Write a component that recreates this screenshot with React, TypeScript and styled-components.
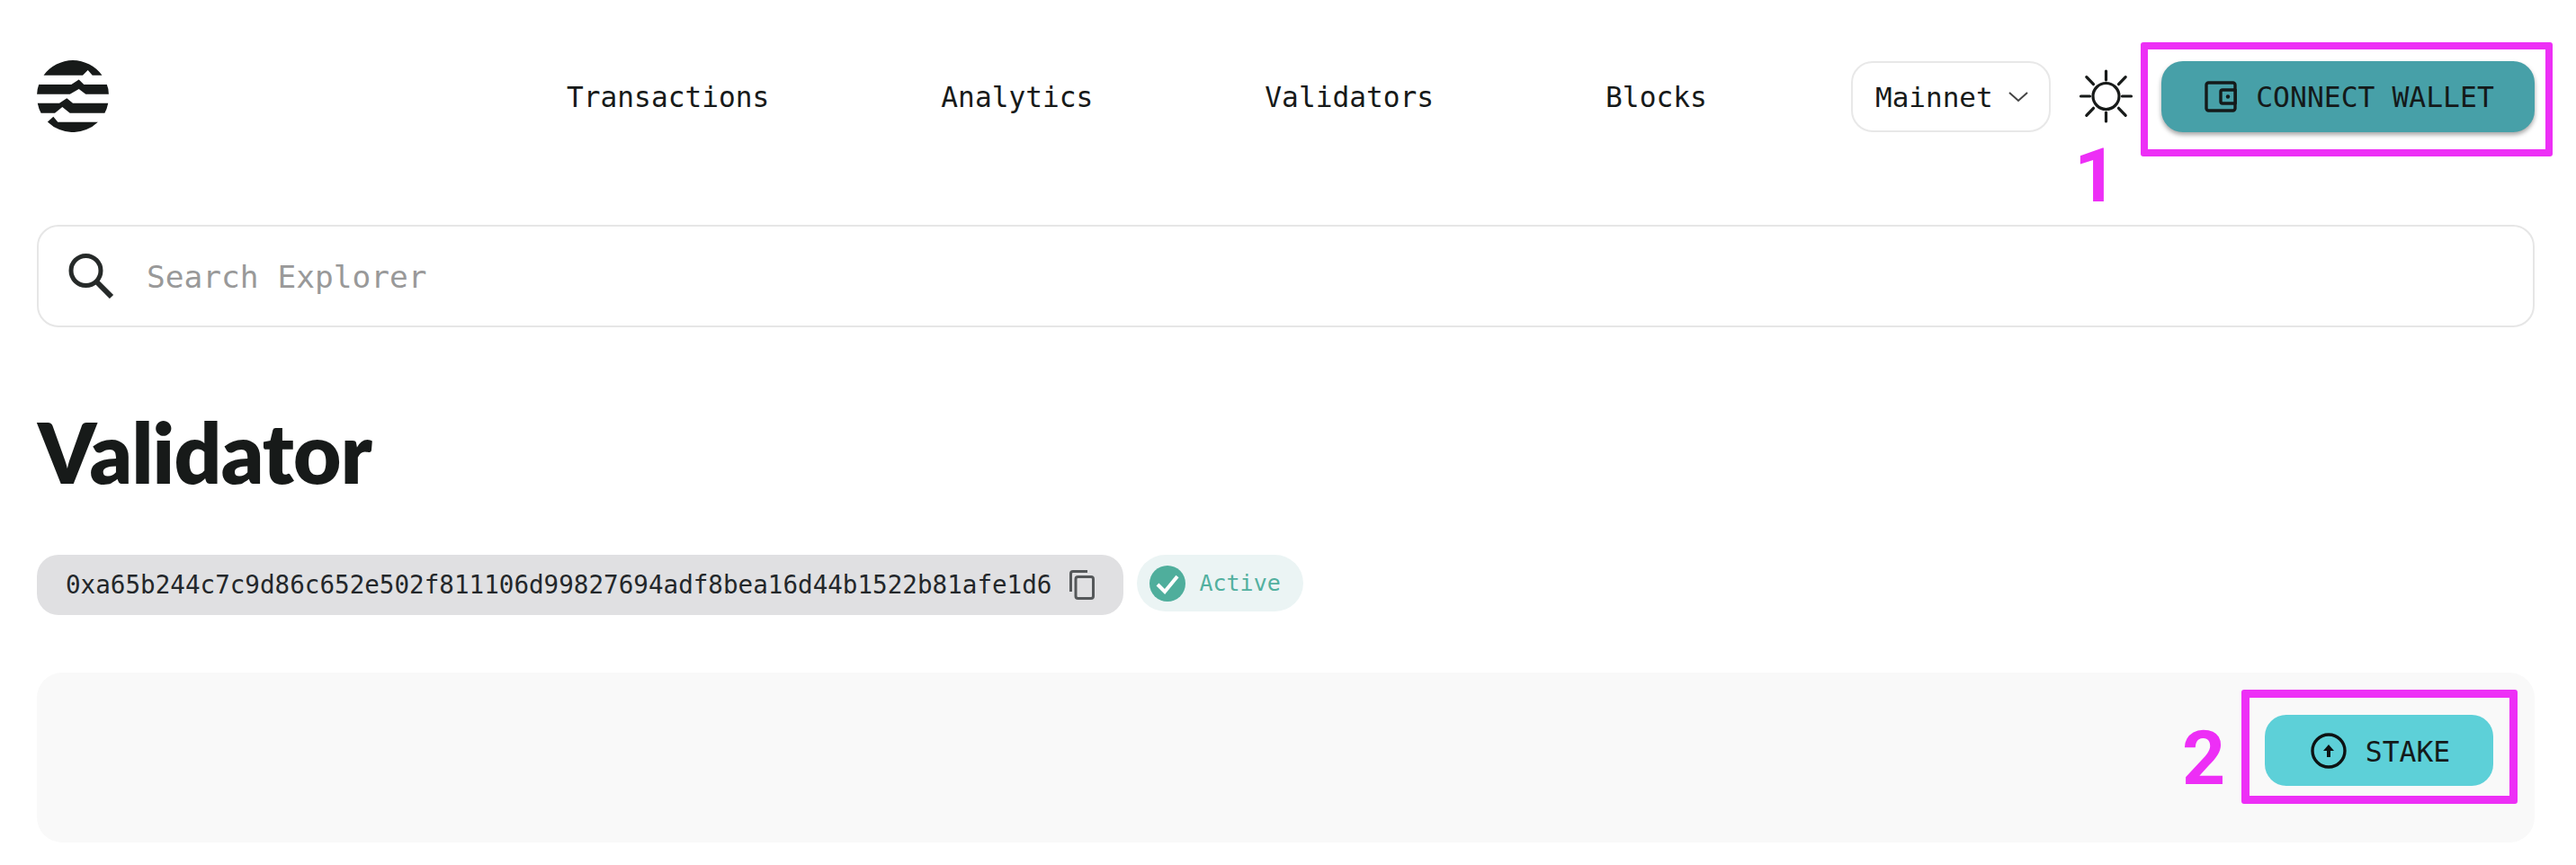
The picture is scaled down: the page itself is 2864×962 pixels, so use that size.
import styled, { createGlobalStyle } from 'styled-components';

const GlobalStyle = createGlobalStyle`
  html, body {
    margin: 0;
    padding: 0;
    background: #fff;
  }
  * {
    box-sizing: border-box;
  }
`;

const mono = `"DejaVu Sans Mono", "Liberation Mono", monospace`;

const Page = styled.div`
  width: 2864px;
  height: 962px;
  padding: 67px 46px 0 41px;
  color: #171a19;
  font-family: ${mono};
  overflow: hidden;
`;

const Header = styled.header`
  display: flex;
  align-items: center;
  height: 80px;
`;

const Logo = styled.svg`
  width: 80px;
  height: 80px;
  flex: none;
  fill: #171a19;
`;

const Nav = styled.nav`
  display: flex;
  gap: 191px;
  margin-left: 509px;
  padding-top: 2px;
`;

const NavLink = styled.a`
  font-size: 31.2px;
  line-height: 40px;
  color: #171a19;
`;

const HeaderRight = styled.div`
  display: flex;
  align-items: center;
  gap: 31px;
  margin-left: auto;
`;

const NetworkSelect = styled.button`
  display: flex;
  align-items: center;
  gap: 17px;
  width: 222px;
  height: 79px;
  padding: 2px 0 0 25px;
  background: #fff;
  border: 2px solid #e8e8e8;
  border-radius: 24px;
  font-family: inherit;
  font-size: 31px;
  color: #171a19;
`;

const ThemeIcon = styled.svg`
  width: 61px;
  height: 60px;
  stroke: #171a19;
  stroke-width: 3.2;
  fill: none;
  stroke-linecap: round;
`;

const Highlighted = styled.div`
  position: relative;
  display: flex;
`;

const HighlightBox = styled.div<{ $top: number; $right: number; $bottom: number; $left: number; $border: number }>`
  position: absolute;
  top: ${(p) => p.$top}px;
  right: ${(p) => p.$right}px;
  bottom: ${(p) => p.$bottom}px;
  left: ${(p) => p.$left}px;
  border: ${(p) => p.$border}px solid #ed2ff6;
  border-radius: 3px;
  pointer-events: none;
`;

const StepNumber = styled.span<{ $top: number; $left: number }>`
  position: absolute;
  top: ${(p) => p.$top}px;
  left: ${(p) => p.$left}px;
  font-family: Roboto, "Liberation Sans", sans-serif;
  font-weight: 700;
  font-size: 84px;
  line-height: 84px;
  color: #ed2ff6;
`;

const ActionButton = styled.button<{ $bg: string; $width: number; $shadow?: boolean }>`
  display: flex;
  align-items: center;
  justify-content: center;
  width: ${(p) => p.$width}px;
  height: 79px;
  padding: 0 0 0 3px;
  border: none;
  border-radius: 24px;
  background: ${(p) => p.$bg};
  box-shadow: ${(p) => (p.$shadow ? '0 3px 5px rgba(0, 0, 0, 0.35)' : 'none')};
  font-family: inherit;
  font-size: 31.4px;
  color: #141a1a;
`;

const WalletIcon = styled.svg`
  width: 36px;
  height: 35px;
  margin-right: 21px;
  fill: none;
  stroke: #141a1a;
  stroke-width: 3.4;
`;

const StakeIcon = styled.svg`
  width: 40px;
  height: 40px;
  margin-right: 21px;
`;

const ButtonLabel = styled.span`
  padding-top: 2px;
`;

const SearchBar = styled.div`
  display: flex;
  align-items: center;
  height: 114px;
  margin-top: 103px;
  padding-left: 33px;
  border: 2px solid #e6e6e6;
  border-radius: 24px;
`;

const SearchIcon = styled.svg`
  width: 51px;
  height: 50px;
  flex: none;
  margin-right: 36px;
  fill: none;
  stroke: #262a29;
`;

const SearchPlaceholder = styled.span`
  padding-top: 2px;
  font-size: 34.5px;
  color: #999;
`;

const Title = styled.h1`
  margin: 77px 0 0 1px;
  font-family: Lato, "Noto Sans", sans-serif;
  font-weight: 800;
  font-size: 92px;
  line-height: 124px;
  letter-spacing: -0.7px;
  color: #171a19;
`;

const MetaRow = styled.div`
  display: flex;
  align-items: flex-start;
  gap: 15px;
  margin-top: 52px;
`;

const AddressPill = styled.div`
  display: flex;
  align-items: center;
  height: 67px;
  padding: 0 32px 0 32px;
  gap: 20px;
  border-radius: 24px;
  background: #e0e0e2;
  font-size: 27.6px;
  color: #23272a;
`;

const CopyIcon = styled.svg`
  width: 28px;
  height: 33px;
  flex: none;
  fill: none;
  stroke: #55585a;
  stroke-width: 3;
`;

const StatusBadge = styled.div`
  display: flex;
  align-items: center;
  gap: 15px;
  height: 63px;
  padding: 0 25px 0 14px;
  border-radius: 32px;
  background: #ebf4f4;
  font-size: 25px;
  color: #52b09f;
`;

const CheckIcon = styled.svg`
  width: 40px;
  height: 40px;
  flex: none;
`;

const ActionPanel = styled.section`
  display: flex;
  justify-content: flex-end;
  align-items: flex-start;
  height: 189px;
  margin-top: 64px;
  padding: 47px 46px 0 0;
  border-radius: 28px;
  background: #f9f9f9;
`;

function AptosLogo() {
  return (
    <Logo viewBox="0 0 80 80">
      <path d="M7.5 16.7A40 40 0 0 1 72.5 16.7H61.7L56.7 11L51 16.7Z" />
      <path d="M2.2 27H38.3L46.7 21.5L52.3 27H77.8Q80 32 79.9 37.7H54.3L46.7 32L36.7 37.7H.1Q.2 32 2.2 27Z" />
      <path d="M.75 47.7H25L33.3 42.2L40 47.7H79.25Q78 54 75.4 58.7H36.7L28.3 52L20 58.7H4.6Q2 54 .75 47.7Z" />
      <path d="M11.7 68.7L18.3 62.7L23.3 68.7H67.9A40 40 0 0 1 12.1 68.7Z" />
    </Logo>
  );
}

function SunIcon() {
  return (
    <ThemeIcon viewBox="0 0 60 60">
      <circle cx="30" cy="30" r="14.5" />
      <path d="M30 2V12M30 48V58M2 30H12M48 30H58M8.3 8.7L16 16.7M44 43.3L51.7 51.3M8.3 51.3L16 43.3M44 16.7L51.7 8.7" />
    </ThemeIcon>
  );
}

export default function App() {
  return (
    <>
      <GlobalStyle />
      <Page>
        <Header>
          <AptosLogo />
          <Nav>
            <NavLink>Transactions</NavLink>
            <NavLink>Analytics</NavLink>
            <NavLink>Validators</NavLink>
            <NavLink>Blocks</NavLink>
          </Nav>
          <HeaderRight>
            <NetworkSelect>
              Mainnet
              <svg width="22" height="12" viewBox="0 0 22 12" fill="none" stroke="#444" strokeWidth="2">
                <path d="M1 1L11 10L21 1" />
              </svg>
            </NetworkSelect>
            <SunIcon />
            <Highlighted>
              <ActionButton $bg="#47a0a8" $width={415} $shadow>
                <WalletIcon viewBox="0 0 36 35">
                  <rect x="2" y="2" width="32" height="31" rx="2.5" />
                  <rect x="18" y="10" width="17" height="15" rx="2" />
                  <circle cx="26" cy="17.5" r="2.2" fill="#141a1a" stroke="none" />
                </WalletIcon>
                <ButtonLabel>CONNECT WALLET</ButtonLabel>
              </ActionButton>
              <HighlightBox $top={-21} $right={-20} $bottom={-27} $left={-23} $border={8} />
              <StepNumber $top={86} $left={-97}>1</StepNumber>
            </Highlighted>
          </HeaderRight>
        </Header>

        <SearchBar>
          <SearchIcon viewBox="0 0 51 50">
            <circle cx="19.5" cy="19" r="16.5" strokeWidth="5" />
            <path d="M31 31L48 48" strokeWidth="6" />
          </SearchIcon>
          <SearchPlaceholder>Search Explorer</SearchPlaceholder>
        </SearchBar>

        <Title>Validator</Title>

        <MetaRow>
          <AddressPill>
            0xa65b244c7c9d86c652e502f811106d99827694adf8bea16d44b1522b81afe1d6
            <CopyIcon viewBox="0 0 28 33">
              <path d="M1.5 24V4Q1.5 1.5 4 1.5H20" />
              <rect x="7" y="7.5" width="19.5" height="24" rx="2.5" />
            </CopyIcon>
          </AddressPill>
          <StatusBadge>
            <CheckIcon viewBox="0 0 40 40">
              <circle cx="20" cy="20" r="20" fill="#4fae9c" />
              <path d="M9 21L17 29L31 12" fill="none" stroke="#fff" strokeWidth="4" />
            </CheckIcon>
            Active
          </StatusBadge>
        </MetaRow>

        <ActionPanel>
          <Highlighted>
            <ActionButton $bg="#5dd0d8" $width={254}>
              <StakeIcon viewBox="0 0 40 40">
                <circle cx="20" cy="20" r="18" fill="none" stroke="#0d1213" strokeWidth="3.4" />
                <path d="M20 13L26 20H22V27H18V20H14Z" fill="#0d1213" />
              </StakeIcon>
              <ButtonLabel>STAKE</ButtonLabel>
            </ActionButton>
            <HighlightBox $top={-28} $right={-27} $bottom={-20} $left={-26} $border={9} />
            <StepNumber $top={7} $left={-92}>2</StepNumber>
          </Highlighted>
        </ActionPanel>
      </Page>
    </>
  );
}
